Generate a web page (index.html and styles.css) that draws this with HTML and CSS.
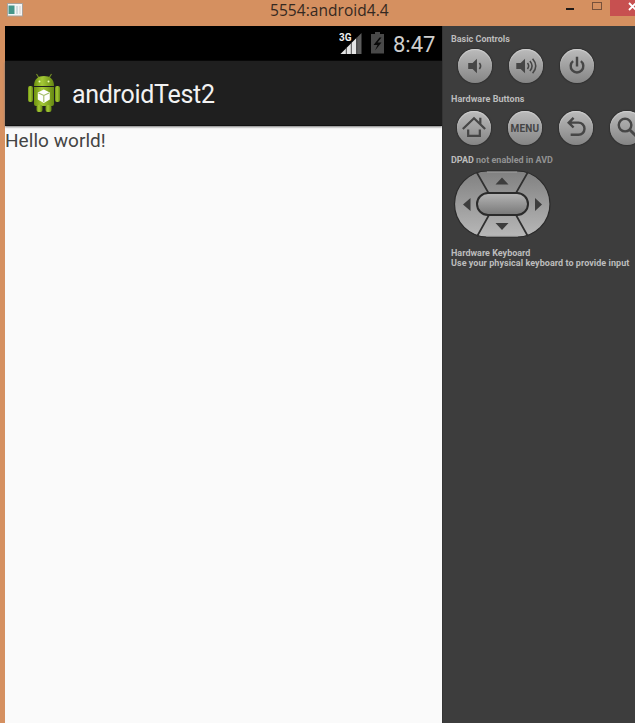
FILE: index.html
```
<!DOCTYPE html>
<html lang="en">
<head>
<meta charset="utf-8">
<title>5554:android4.4</title>
<link rel="stylesheet" href="styles.css">
</head>
<body>
<div class="window">
  <header class="titlebar">
    <svg class="app-icon" width="16" height="14" viewBox="0 0 16 14"><rect x=".5" y=".5" width="15" height="12.5" fill="#f4f5f5" stroke="#a9a29b"/><rect x="1.500" y="2.500" width="6" height="8.500" fill="#46968a"/><rect x="9" y="3" width="2" height="8" fill="#cfdcdf"/><rect x="12" y="3" width="2" height="8" fill="#e2e2e2"/></svg>
    <h1 class="title">5554:android4.4</h1>
    <div class="window-buttons">
      <svg width="79" height="16" viewBox="0 0 79 16"><rect x="10" y="8" width="8" height="2" fill="#201a17"/><rect x="36.500" y="2.500" width="9" height="7" fill="none" stroke="#77513a"/><rect x="54" width="25" height="16" fill="#c75050"/><path d="M73 3l7 7M80 3l-7 7" stroke="#fff" stroke-width="1.900"/></svg>
    </div>
  </header>
  <div class="content">
    <main class="phone">
      <div class="status">
        <svg width="52" height="26" viewBox="0 0 52 26"><path d="M1.500 22L22.500 1v21z" fill="#5c5c5c"/><path d="M1.500 22L17.500 6V22z" fill="#e4e4e4"/><path d="M7.300 15v7M12.300 11v11M17.700 5v17" stroke="#222" stroke-width=".8"/><path d="M0 0h13v9.500H0z" fill="#000"/><text class="network" x="0" y="8.800" textLength="12.500" lengthAdjust="spacingAndGlyphs">3G</text><path d="M32 2h4V0h5v2h4v19.500H32z" fill="#494949"/><path d="M40.500 5.500L34.500 13h4L36 18.500l6.500-8h-4l4-5z" fill="#090909"/></svg>
        <span class="clock">8:47</span>
      </div>
      <div class="actionbar">
        <svg width="34" height="40" viewBox="0 0 34 40">
          <defs><linearGradient id="green"><stop stop-color="#6f9210"/><stop offset=".4" stop-color="#a4c936"/><stop offset="1" stop-color="#668812"/></linearGradient></defs>
          <path d="M9.500 1l2.500 4M24.500 1l-2.500 4" stroke="#759126" stroke-width="1.100"/>
          <g fill="url(#green)"><path d="M7 13C7 6 11 3 17 3s10 3 10 10z"/><path d="M7 14h20v17q0 2-2 2H9q-2 0-2-2z"/><rect x="1" y="13" width="5" height="16" rx="2"/><rect x="28" y="13" width="5" height="16" rx="2"/><rect x="9.500" y="32" width="6" height="7" rx="2"/><rect x="18.500" y="32" width="6" height="7" rx="2"/></g>
          <circle cx="12.500" cy="8.500" r="1" fill="#efffc0"/><circle cx="21.500" cy="8.500" r="1" fill="#efffc0"/>
          <path d="M16.800 16.500l6 3v7l-6 3.500-6-3.500v-7z" fill="#fff"/><path d="M11.500 20l5.300 2.500 5.300-2.500M16.800 22.500V29" fill="none" stroke="#a1bb66" stroke-width="1.100"/>
        </svg>
        <span class="app-name">androidTest2</span>
      </div>
      <p class="hello">Hello world!</p>
    </main>
    <aside class="controls">
      <h2 class="label basic">Basic Controls</h2>
      <div class="buttons basic-row">
        <span class="key"><svg width="34" height="34" viewBox="0 0 35 35"><path d="M10.500 14.500h4.500l4.500-4.500v15L15 20.500h-4.500z" fill="#464646"/><path d="M22 14.500q2.500 3 0 6" fill="none" stroke="#464646" stroke-width="1.700"/></svg></span>
        <span class="key"><svg width="34" height="34" viewBox="0 0 35 35"><path d="M7.500 14.500H12l4.500-4.500v15L12 20.500H7.500z" fill="#464646"/><path d="M19 14.500q2.500 3 0 6M21.500 12.300q4.500 5.200 0 10.400M24.300 10q6.500 7.500 0 15" fill="none" stroke="#464646" stroke-width="1.600"/></svg></span>
        <span class="key"><svg width="34" height="34" viewBox="0 0 35 35"><path d="M13.500 12.500a6.500 6.500 0 1 0 8 0M17.500 8v10" fill="none" stroke="#464646" stroke-width="2.500"/></svg></span>
      </div>
      <h2 class="label hardware">Hardware Buttons</h2>
      <div class="buttons hardware-row">
        <span class="key"><svg width="34" height="34" viewBox="0 0 35 35"><path d="M6 18.500L17.500 7.500 29 18.500M24 7v7M11.500 19v6.500h12V19" fill="none" stroke="#464646" stroke-width="2.300"/></svg></span>
        <span class="key menu">MENU</span>
        <span class="key"><svg width="34" height="34" viewBox="0 0 35 35"><path d="M15 7l-5 5 5 5M10.500 12H20a6 6 0 0 1 0 12.500h-8" fill="none" stroke="#464646" stroke-width="2.500"/></svg></span>
        <span class="key"><svg width="34" height="34" viewBox="0 0 35 35"><circle cx="15.500" cy="14.500" r="6.500" fill="none" stroke="#464646" stroke-width="2.500"/><path d="M20 19l7 7" stroke="#464646" stroke-width="3"/></svg></span>
      </div>
      <p class="label dpad-label">DPAD <span class="muted">not enabled in AVD</span></p>
      <svg class="dpad" width="98" height="70" viewBox="0 0 98 70">
        <defs><linearGradient id="metal" x2="0" y2="1"><stop stop-color="#808080"/><stop offset="1" stop-color="#b8b8b8"/></linearGradient><linearGradient id="center" x2="0" y2="1"><stop stop-color="#b6b6b6"/><stop offset="1" stop-color="#777"/></linearGradient></defs>
        <rect x="1.500" y="2" width="95.500" height="66" rx="33" fill="url(#metal)" stroke="#2b2b2b" stroke-width="1.200"/>
        <path d="M34 3h30M33 67h32" stroke="#aaa" stroke-width=".8"/>
        <path d="M23.500 3l12 21M75 3L63 24M36 46L24 67.500M63 46l12 21.500" stroke="#303030" stroke-width="1.700"/>
        <rect x="24" y="24" width="51" height="22" rx="11" fill="url(#center)" stroke="#2b2b2b" stroke-width="2"/>
        <path d="M42.500 15.500L49 8.500l6.500 7zM42.500 54h13L49 61zM17.500 29v13L10 35.500zM82 29v13l7-6.500z" fill="#3d3d3d"/>
      </svg>
      <p class="label keyboard">Hardware Keyboard<br><span class="instruction">Use your physical keyboard to provide input</span></p>
    </aside>
  </div>
</div>
</body>
</html>
```
FILE: styles.css
```
* { box-sizing: border-box; }
body { margin: 0; overflow: hidden; font-family: Roboto, sans-serif; }
h1, h2, p { margin: 0; font-weight: 400; }
svg { display: block; flex-shrink: 0; }
.window { width: 635px; height: 723px; overflow: hidden; background: #d59060; display: flex; flex-direction: column; }
.titlebar { height: 26px; flex: none; display: grid; grid-template-columns: 263px 293px 79px; }
.app-icon { margin: 3px 0 0 7px; }
.title { color: #342820; font: 15.5px/20px "Open Sans", sans-serif; padding-left: 7px; letter-spacing: .05px; white-space: nowrap; }
.content { display: flex; flex: 1; padding-left: 5px; }
.phone { width: 437px; flex: none; background: #fafafa; }
.status { height: 35px; background: #000; display: flex; justify-content: flex-end; padding: 6px 7px 0 0; }
.network { font: bold 10px Roboto, sans-serif; fill: #eee; }
.clock { color: #cecece; font-size: 22px; line-height: 25px; width: 42px; margin-left: 2px; white-space: nowrap; }
.actionbar { height: 65px; padding: 12px 0 0 22px; display: flex; background: #1f1f1f; border-bottom: 1px solid #111; box-shadow: 0 1px 2px #777; }
.app-name { color: #f2f2f2; font-size: 25px; line-height: 43px; margin-left: 11px; letter-spacing: -.3px; }
.hello { color: #444; font-size: 19px; line-height: 24px; padding-top: 3px; letter-spacing: .05px; }
.controls { flex: 1; min-width: 0; overflow: hidden; background: #3d3d3d; border-left: 1px solid #343434; padding-left: 8px; }
.label { color: #bcbcbc; font-size: 9px; font-weight: 700; line-height: 10px; white-space: nowrap; }
.basic { margin-top: 8px; }
.buttons { display: flex; gap: 17px; padding-left: 7px; }
.key { width: 34px; height: 34px; flex: none; border-radius: 50%; background: linear-gradient(#bbb, #858585); box-shadow: 0 0 1px 1px #303030, inset 0 1px 1px #d0d0d0; }
.basic-row { margin-top: 5px; }
.hardware { margin-top: 11px; letter-spacing: .05px; }
.hardware-row { margin-top: 7px; padding-left: 6px; }
.menu { color: #454545; font-size: 10px; line-height: 35px; font-weight: 700; text-align: center; letter-spacing: .2px; }
.dpad-label { margin-top: 10px; }
.muted { color: #929292; }
.dpad { margin: 4px 0 0 2px; }
.keyboard { margin-top: 9px; }
.instruction { letter-spacing: .05px; }
```
